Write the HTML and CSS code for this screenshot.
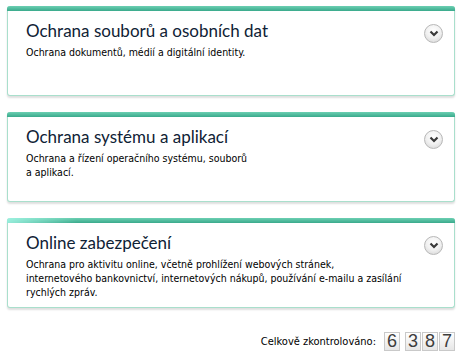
FILE: index.html
```html
<!DOCTYPE html>
<html lang="cs">
<head>
  <meta charset="utf-8">
  <title>Ochrana</title>
  <link rel="stylesheet" href="styles.css">
</head>
<body>
  <div id="panel">
    <div class="card">
      <div class="bar"></div>
      <div class="body">
        <div class="text">
          <h2>Ochrana souborů a osobních dat</h2>
          <p>Ochrana dokumentů, médií a digitální identity.</p>
        </div>
        <span class="toggle"><svg width="10" height="7" viewBox="0 0 10 7"><path d="M1.5 1.5 L5 5 L8.5 1.5" fill="none" stroke="#3a3a3a" stroke-width="2.2"/></svg></span>
      </div>
    </div>
    <div class="card">
      <div class="bar"></div>
      <div class="body">
        <div class="text">
          <h2>Ochrana systému a aplikací</h2>
          <p>Ochrana a řízení operačního systému, souborů<br>a aplikací.</p>
        </div>
        <span class="toggle"><svg width="10" height="7" viewBox="0 0 10 7"><path d="M1.5 1.5 L5 5 L8.5 1.5" fill="none" stroke="#3a3a3a" stroke-width="2.2"/></svg></span>
      </div>
    </div>
    <div class="card">
      <div class="bar shine"></div>
      <div class="body">
        <div class="text">
          <h2>Online zabezpečení</h2>
          <p>Ochrana pro aktivitu online, včetně prohlížení webových stránek,<br>internetového bankovnictví, internetových nákupů, používání e-mailu a zasílání<br>rychlých zpráv.</p>
        </div>
        <span class="toggle"><svg width="10" height="7" viewBox="0 0 10 7"><path d="M1.5 1.5 L5 5 L8.5 1.5" fill="none" stroke="#3a3a3a" stroke-width="2.2"/></svg></span>
      </div>
    </div>
    <div class="counter">
      <span class="label">Celkově zkontrolováno:</span>
      <span class="digits"><span class="digit">6</span></span>
      <span class="digits"><span class="digit">3</span><span class="digit">8</span><span class="digit">7</span></span>
    </div>
  </div>
</body>
</html>
```

FILE: styles.css
```css
body {
  margin: 0;
  background-color: #ffffff;
  font-family: "DejaVu Sans", Verdana, sans-serif;
  color: #000000;
}
#panel {
  display: flex;
  flex-flow: column nowrap;
  gap: 16px;
  padding: 6px 10px 0px 7px;
}
.card {
  height: 89px;
  display: flex;
  flex-flow: column nowrap;
  border: 1px solid #a9dfcc;
  border-top: none;
  border-radius: 3px;
  background-color: #ffffff;
  box-shadow: 0px 2px 2px rgba(0, 0, 0, 0.13);
}
.bar {
  height: 5px;
  margin: 0px -1px;
  border-radius: 3px 3px 0px 0px;
  background: linear-gradient(#6ccfb2, #3aaa8c);
}
.bar.shine {
  background: linear-gradient(90deg, rgba(170, 250, 235, 0.8) 0px, rgba(170, 250, 235, 0) 70px), linear-gradient(#6ccfb2, #3aaa8c);
}
.body {
  display: flex;
  justify-content: space-between;
  padding: 8px 11px 0px 18px;
}
h2 {
  margin: 0px;
  font-family: Lato, sans-serif;
  font-weight: normal;
  font-size: 17px;
  line-height: 24px;
  color: #0f2235;
}
p {
  margin: 2px 0px 0px 0px;
  font-family: "DejaVu Sans Condensed", "DejaVu Sans", sans-serif;
  font-size: 10.5px;
  line-height: 14px;
}
.toggle {
  width: 17px;
  height: 17px;
  margin-top: 5px;
  border-radius: 50%;
  border: 1px solid #b8b8b8;
  background: radial-gradient(circle at 50% 35%, #ffffff 0%, #f1f1f1 50%, #d2d2d2 100%);
  display: flex;
  align-items: center;
  justify-content: center;
  flex-shrink: 0;
}
.counter {
  display: flex;
  justify-content: flex-end;
  align-items: center;
  gap: 5px;
  margin-top: 8px;
  font-family: "DejaVu Sans Condensed", "DejaVu Sans", sans-serif;
  font-size: 11px;
}
.label {
  margin-right: 3px;
}
.digits {
  display: flex;
  gap: 1px;
}
.digit {
  width: 14px;
  height: 17px;
  border: 1px solid #c9c9c9;
  background: linear-gradient(#ffffff, #e6e6e6);
  font-family: "Liberation Sans", Arial, sans-serif;
  font-size: 18px;
  line-height: 17px;
  text-align: center;
  color: #3d3d3d;
}
```
